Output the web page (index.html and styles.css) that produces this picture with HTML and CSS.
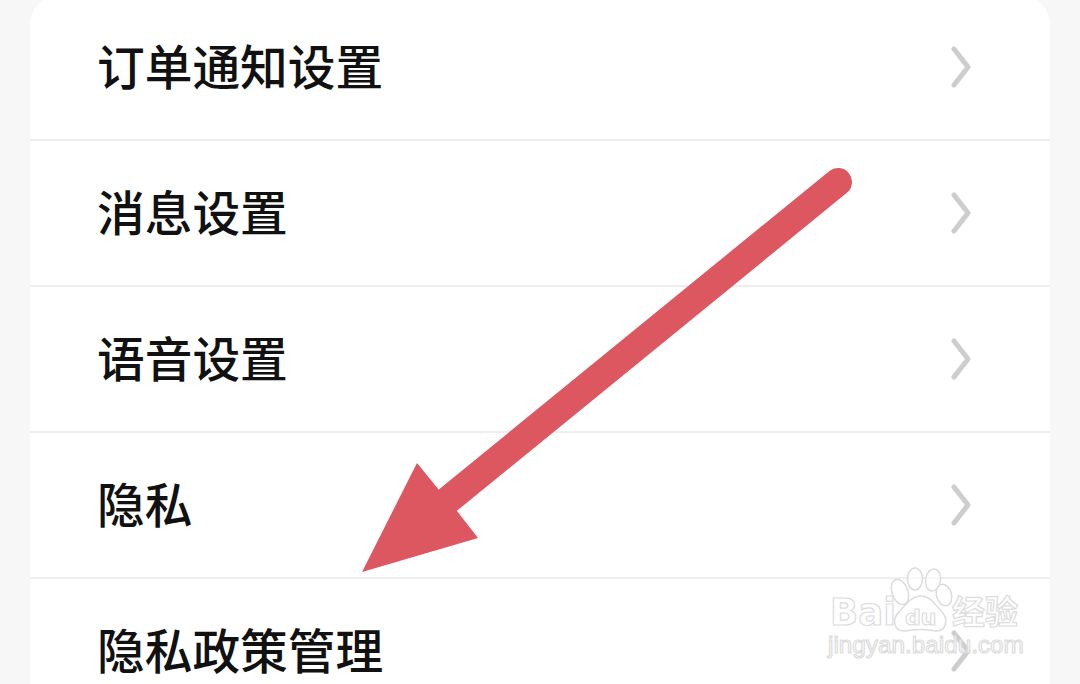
FILE: index.html
```html
<!DOCTYPE html>
<html lang="zh">
<head>
<meta charset="utf-8">
<title>设置</title>
<link rel="stylesheet" href="styles.css">
</head>
<body>
<main class="card">
  <div class="row"><span>订单通知设置</span><svg class="chev" viewBox="0 0 20 42"><path d="M3 3 L17 21 L3 39"/></svg></div>
  <div class="row"><span>消息设置</span><svg class="chev" viewBox="0 0 20 42"><path d="M3 3 L17 21 L3 39"/></svg></div>
  <div class="row"><span>语音设置</span><svg class="chev" viewBox="0 0 20 42"><path d="M3 3 L17 21 L3 39"/></svg></div>
  <div class="row"><span>隐私</span><svg class="chev" viewBox="0 0 20 42"><path d="M3 3 L17 21 L3 39"/></svg></div>
  <div class="row"><span>隐私政策管理</span><svg class="chev" viewBox="0 0 20 42"><path d="M3 3 L17 21 L3 39"/></svg></div>
</main>
<svg class="overlay" viewBox="0 0 1080 684">
  <path class="arrow-shaft" d="M838 182 L448 500"/>
  <path class="arrow-head" d="M362 572 L417 463 L439 490 L457 511 L478 538 Z"/>
  <g class="wm">
    <ellipse cx="900" cy="592" rx="8" ry="13" transform="rotate(-20 900 592)"/>
    <ellipse cx="915" cy="579" rx="7.500" ry="11"/>
    <ellipse cx="933" cy="580" rx="7.500" ry="11" transform="rotate(8 933 580)"/>
    <ellipse cx="944" cy="595" rx="7.500" ry="11" transform="rotate(-15 944 595)"/>
    <path d="M905 631 C893 631 892 619 899 612 C906 605 911 596 921 596 C931 596 935 605 942 612 C949 620 946 631 936 631 C926 629 915 629 905 631 Z"/>
    <text class="wm-lg" x="830" y="625">Bai</text>
    <text class="wm-du" x="905" y="625">du</text>
    <text class="wm-cn" x="952" y="624">经验</text>
    <text class="wm-sm" x="828" y="653">jingyan.baidu.com</text>
  </g>
</svg>
</body>
</html>
```
FILE: styles.css
```css
html, body {
  margin: 0;
  height: 684px;
  overflow: hidden;
  background: #f7f7f7;
}
.card {
  margin: -5px 30px 0;
  background: #fff;
  border-radius: 30px 30px 0 0;
}
.row {
  height: 146px;
  box-sizing: border-box;
  padding: 0 79px 0 67px;
  display: flex;
  align-items: center;
  justify-content: space-between;
  border-bottom: 2px solid #eeeeee;
  font-family: "Noto Sans CJK SC", "Noto Sans", sans-serif;
  font-size: 47.700px;
  font-weight: 500;
  color: #111111;
}
.row span { position: relative; top: -3px; }
.chev {
  width: 20px;
  height: 42px;
  fill: none;
  stroke: #cdcdcd;
  stroke-width: 5;
  stroke-linecap: round;
  stroke-linejoin: round;
}
.overlay {
  position: absolute;
  left: 0;
  top: 0;
  width: 1080px;
  height: 684px;
}
.arrow-shaft {
  fill: none;
  stroke: #dc5760;
  stroke-width: 28;
  stroke-linecap: round;
}
.arrow-head { fill: #dc5760; }
.wm ellipse, .wm path {
  fill: rgba(255, 255, 255, 0.6);
  stroke: #dcdcdc;
  stroke-width: 1.500;
}
.wm text {
  fill: rgba(255, 255, 255, 0.8);
  stroke: #dcdcdc;
  stroke-width: 1.200;
  font-family: "Liberation Sans", sans-serif;
}
.wm .wm-lg { font-family: "DejaVu Sans", sans-serif; font-weight: 700; font-size: 37px; }
.wm .wm-du { font-family: "DejaVu Sans", sans-serif; font-weight: 700; font-size: 22px; }
.wm .wm-cn { font-family: "Noto Sans CJK SC", sans-serif; font-weight: 700; font-size: 33px; }
.wm-sm { font-size: 24.300px; }
```
